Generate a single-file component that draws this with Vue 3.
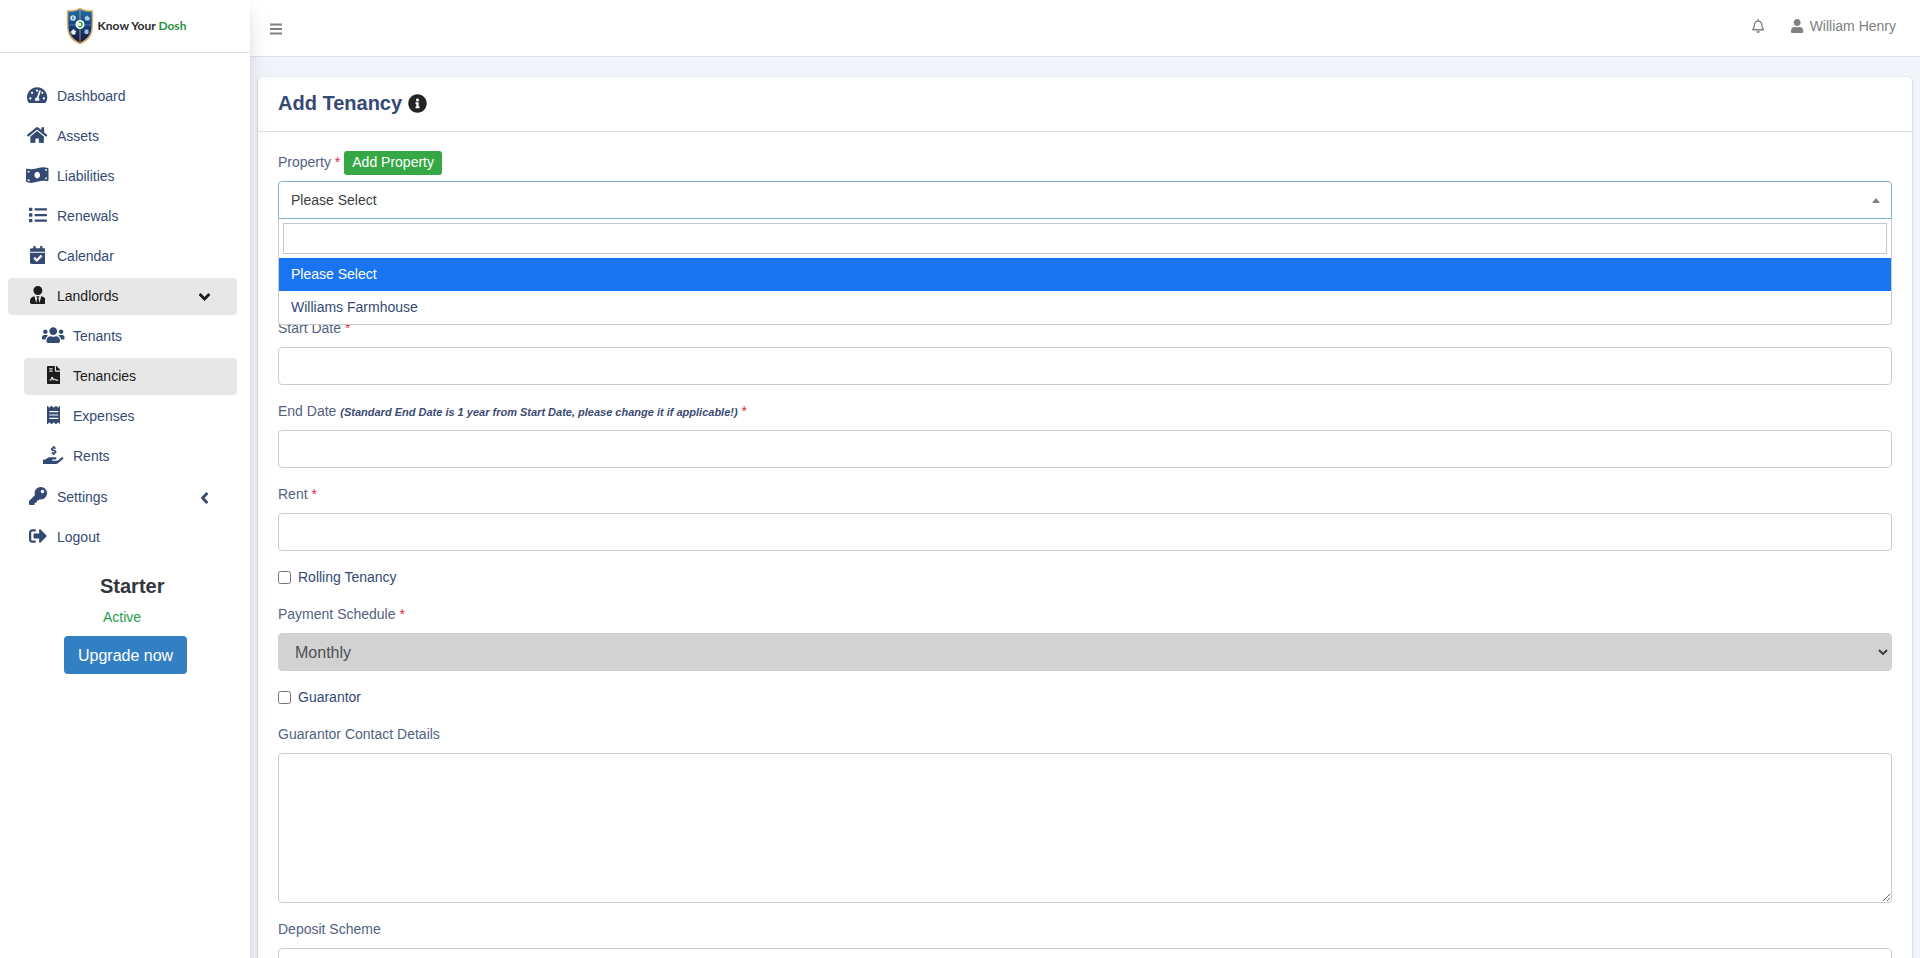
<script setup>
import { ref } from 'vue'

const icons = {
  gauge: { w: 576, d: 'M288 32C128.94 32 0 160.94 0 320c0 52.8 14.25 102.26 39.06 144.8 5.61 9.62 16.3 15.2 27.44 15.2h443c11.14 0 21.83-5.58 27.44-15.2C561.75 422.26 576 372.8 576 320c0-159.06-128.94-288-288-288zm0 64c14.71 0 26.58 10.13 30.32 23.65-1.11 2.26-2.64 4.23-3.45 6.67l-9.22 27.67c-5.13 3.49-10.97 6.01-17.64 6.01-17.67 0-32-14.33-32-32S270.33 96 288 96zM96 384c-17.67 0-32-14.33-32-32s14.33-32 32-32 32 14.33 32 32-14.33 32-32 32zm48-160c-17.67 0-32-14.33-32-32s14.33-32 32-32 32 14.33 32 32-14.33 32-32 32zm246.77-72.41l-61.33 184C343.13 347.33 352 364.54 352 384c0 11.72-3.38 22.55-8.88 32H232.88c-5.5-9.45-8.88-20.28-8.88-32 0-33.94 26.5-61.43 59.9-63.59l61.34-184.01c4.17-12.56 17.73-19.45 30.36-15.17 12.57 4.19 19.35 17.79 15.17 30.36zm14.66 57.2l15.52-46.55c3.47-1.29 7.13-2.23 11.05-2.23 17.67 0 32 14.33 32 32s-14.33 32-32 32c-11.38-.01-20.89-6.28-26.57-15.22zM480 384c-17.67 0-32-14.33-32-32s14.33-32 32-32 32 14.33 32 32-14.33 32-32 32z' },
  home: { w: 576, d: 'M280.37 148.26L96 300.11V464a16 16 0 0 0 16 16l112.06-.29a16 16 0 0 0 15.92-16V368a16 16 0 0 1 16-16h64a16 16 0 0 1 16 16v95.64a16 16 0 0 0 16 16.05L464 480a16 16 0 0 0 16-16V300L295.67 148.26a12.19 12.19 0 0 0-15.3 0zM571.6 251.47L488 182.56V44.05a12 12 0 0 0-12-12h-56a12 12 0 0 0-12 12v72.61L318.47 43a48 48 0 0 0-61 0L4.34 251.47a12 12 0 0 0-1.6 16.9l25.5 31A12 12 0 0 0 45.15 301l235.22-193.74a12.19 12.19 0 0 1 15.3 0L530.9 301a12 12 0 0 0 16.9-1.6l25.5-31a12 12 0 0 0-1.7-16.93z' },
  money: { w: 640, d: 'M621.16 54.46C582.37 38.19 543.55 32 504.75 32c-123.17-.01-246.33 62.34-369.5 62.34-30.89 0-61.76-3.92-92.65-13.72-3.47-1.1-6.95-1.62-10.35-1.62C15.04 79 0 92.32 0 110.81v317.26c0 12.63 7.23 24.6 18.84 29.46C57.63 473.81 96.45 480 135.25 480c123.17 0 246.34-62.35 369.51-62.35 30.89 0 61.76 3.92 92.65 13.72 3.47 1.1 6.95 1.62 10.35 1.62 17.21 0 32.25-13.32 32.25-31.81V83.93c-.01-12.64-7.24-24.6-18.85-29.47zM48 132.22c20.12 5.04 41.12 7.57 62.72 8.93C104.84 170.54 79 192.69 48 192.69v-60.47zm0 285v-47.78c34.37 0 62.18 27.27 63.71 61.4-22.53-1.81-43.59-6.31-63.71-13.62zM320 352c-44.19 0-80-42.99-80-96 0-53.02 35.82-96 80-96s80 42.98 80 96c0 53.03-35.83 96-80 96zm272 27.78c-17.52-4.39-35.71-6.85-54.32-8.44 5.87-26.08 27.5-45.88 54.32-49.28v57.72zm0-236.11c-30.89-3.91-54.86-29.7-55.81-61.55 19.54 2.17 38.09 6.23 55.81 12.66v48.89z' },
  list: { w: 512, d: 'M80 368H16a16 16 0 0 0-16 16v64a16 16 0 0 0 16 16h64a16 16 0 0 0 16-16v-64a16 16 0 0 0-16-16zm0-320H16A16 16 0 0 0 0 64v64a16 16 0 0 0 16 16h64a16 16 0 0 0 16-16V64a16 16 0 0 0-16-16zm0 160H16a16 16 0 0 0-16 16v64a16 16 0 0 0 16 16h64a16 16 0 0 0 16-16v-64a16 16 0 0 0-16-16zm416 176H176a16 16 0 0 0-16 16v32a16 16 0 0 0 16 16h320a16 16 0 0 0 16-16v-32a16 16 0 0 0-16-16zm0-320H176a16 16 0 0 0-16 16v32a16 16 0 0 0 16 16h320a16 16 0 0 0 16-16V80a16 16 0 0 0-16-16zm0 160H176a16 16 0 0 0-16 16v32a16 16 0 0 0 16 16h320a16 16 0 0 0 16-16v-32a16 16 0 0 0-16-16z' },
  calendar: { w: 448, d: 'M436 160H12c-6.627 0-12-5.373-12-12v-36c0-26.51 21.49-48 48-48h48V12c0-6.627 5.373-12 12-12h40c6.627 0 12 5.373 12 12v52h128V12c0-6.627 5.373-12 12-12h40c6.627 0 12 5.373 12 12v52h48c26.51 0 48 21.49 48 48v36c0 6.627-5.373 12-12 12zM12 192h424c6.627 0 12 5.373 12 12v260c0 26.51-21.49 48-48 48H48c-26.51 0-48-21.49-48-48V204c0-6.627 5.373-12 12-12zm333.296 95.947l-28.169-28.398c-4.667-4.705-12.265-4.736-16.97-.068L194.12 364.665l-45.98-46.352c-4.667-4.705-12.266-4.736-16.971-.068l-28.397 28.17c-4.705 4.667-4.736 12.265-.068 16.97l82.601 83.269c4.667 4.705 12.265 4.736 16.97.068l142.953-141.805c4.705-4.667 4.736-12.265.068-16.97z' },
  tie: { w: 448, d: 'M224 256c70.7 0 128-57.3 128-128S294.7 0 224 0 96 57.3 96 128s57.3 128 128 128zm95.8 32.6L272 480l-32-136 32-56h-96l32 56-32 136-47.8-191.4C56.9 292 0 350.3 0 422.4V464c0 26.5 21.5 48 48 48h352c26.5 0 48-21.5 48-48v-41.6c0-72.1-56.9-130.4-128.2-133.8z' },
  users: { w: 640, d: 'M96 224c35.3 0 64-28.7 64-64s-28.7-64-64-64-64 28.7-64 64 28.7 64 64 64zm448 0c35.3 0 64-28.7 64-64s-28.7-64-64-64-64 28.7-64 64 28.7 64 64 64zm32 32h-64c-17.6 0-33.5 7.1-45.1 18.6 40.3 22.1 68.9 62 75.1 109.4h66c17.7 0 32-14.3 32-32v-32c0-35.3-28.7-64-64-64zm-256 0c61.9 0 112-50.1 112-112S381.9 32 320 32 208 82.1 208 144s50.1 112 112 112zm76.8 32h-8.3c-20.8 10-43.9 16-68.5 16s-47.6-6-68.5-16h-8.3C179.6 288 128 339.6 128 403.2V432c0 26.5 21.5 48 48 48h288c26.5 0 48-21.5 48-48v-28.8c0-63.6-51.6-115.2-115.2-115.2zm-223.7-13.4C161.5 263.1 145.6 256 128 256H64c-35.3 0-64 28.7-64 64v32c0 17.7 14.3 32 32 32h65.9c6.3-47.4 34.9-87.3 75.2-109.4z' },
  contract: { w: 384, d: 'M224 136V0H24C10.7 0 0 10.7 0 24v464c0 13.3 10.7 24 24 24h336c13.3 0 24-10.7 24-24V160H248c-13.2 0-24-10.8-24-24zM64 72c0-4.42 3.58-8 8-8h80c4.42 0 8 3.58 8 8v16c0 4.42-3.58 8-8 8H72c-4.42 0-8-3.58-8-8V72zm0 64c0-4.42 3.58-8 8-8h80c4.42 0 8 3.58 8 8v16c0 4.42-3.58 8-8 8H72c-4.42 0-8-3.58-8-8v-16zm192.81 248H304c8.84 0 16 7.16 16 16s-7.16 16-16 16h-47.19c-16.45 0-31.27-9.14-38.64-23.86-2.95-5.92-8.09-6.52-10.17-6.52s-7.22.59-10.02 6.19l-7.67 15.34a15.986 15.986 0 0 1-14.31 8.84c-.38 0-.75-.02-1.14-.05-6.45-.45-12-4.75-14.03-10.89L144 354.59l-10.61 31.88c-5.89 17.66-22.38 29.53-41 29.53H80c-8.84 0-16-7.16-16-16s7.16-16 16-16h12.39c4.83 0 9.11-3.08 10.64-7.66l18.19-54.64c3.3-9.81 12.44-16.41 22.78-16.41s19.48 6.59 22.77 16.41l13.88 41.64c19.77-16.19 54.05-9.7 66 14.16 2.02 4.06 5.96 6.5 10.16 6.5zM377 105L279.1 7c-4.5-4.5-10.6-7-17-7H256v128h128v-6.1c0-6.3-2.5-12.4-7-16.9z' },
  receipt: { w: 384, d: 'M358.4 3.2L320 48 265.6 3.2a15.9 15.9 0 0 0-19.2 0L192 48 137.6 3.2a15.9 15.9 0 0 0-19.2 0L64 48 25.6 3.2C15-4.7 0 2.8 0 16v480c0 13.2 15 20.7 25.6 12.8L64 464l54.4 44.8a15.9 15.9 0 0 0 19.2 0L192 464l54.4 44.8a15.9 15.9 0 0 0 19.2 0L320 464l38.4 44.8c10.5 7.9 25.6.4 25.6-12.8V16c0-13.2-15-20.7-25.6-12.8zM320 360c0 4.4-3.6 8-8 8H72c-4.4 0-8-3.6-8-8v-16c0-4.4 3.6-8 8-8h240c4.4 0 8 3.6 8 8v16zm0-96c0 4.4-3.6 8-8 8H72c-4.4 0-8-3.6-8-8v-16c0-4.4 3.6-8 8-8h240c4.4 0 8 3.6 8 8v16zm0-96c0 4.4-3.6 8-8 8H72c-4.4 0-8-3.6-8-8v-16c0-4.4 3.6-8 8-8h240c4.4 0 8 3.6 8 8v16z' },
  hand: { w: 576, d: 'M271.06,144.3l54.27,14.3a8.59,8.59,0,0,1,6.63,8.1c0,4.6-4.09,8.4-9.12,8.4h-35.6a30,30,0,0,1-11.19-2.2c-5.24-2.2-11.28-1.7-15.3,2l-19,17.5a11.68,11.68,0,0,0-2.25,2.66,11.42,11.42,0,0,0,3.88,15.74,83.77,83.77,0,0,0,34.51,11.5V240c0,8.8,7.83,16,17.37,16h17.37c9.55,0,17.38-7.2,17.38-16V222.4c32.93-3.6,57.84-31,53.5-63-3.15-23-22.46-41.3-46.56-47.7L282.68,97.4a8.59,8.59,0,0,1-6.63-8.1c0-4.6,4.09-8.4,9.12-8.4h35.6A30,30,0,0,1,332,83.1c5.23,2.2,11.28,1.7,15.3-2l19-17.5A11.31,11.31,0,0,0,368.47,61a11.43,11.43,0,0,0-3.84-15.78,83.82,83.82,0,0,0-34.52-11.5V16c0-8.8-7.82-16-17.37-16H295.37C285.82,0,278,7.2,278,16V33.6c-32.89,3.6-57.85,31-53.51,63C227.63,119.6,247,137.9,271.06,144.3ZM565.27,328.1c-11.8-10.7-30.2-10-42.6,0L430.27,402a63.64,63.64,0,0,1-40,14H272a16,16,0,0,1,0-32h78.29c15.9,0,30.71-10.9,33.25-26.6a31.2,31.2,0,0,0,.46-5.46A32,32,0,0,0,352,320H192a117.66,117.66,0,0,0-74.1,26.29L71.4,384H16A16,16,0,0,0,0,400v96a16,16,0,0,0,16,16H372.77a64,64,0,0,0,40-14L564,377a32,32,0,0,0,1.28-48.9Z' },
  key: { w: 512, d: 'M512 176.001C512 273.203 433.202 352 336 352c-11.22 0-22.19-1.062-32.827-3.069l-24.012 27.014A23.999 23.999 0 0 1 261.223 384H224v40c0 13.255-10.745 24-24 24h-40v40c0 13.255-10.745 24-24 24H24c-13.255 0-24-10.745-24-24v-78.059c0-6.365 2.529-12.47 7.029-16.971l161.802-161.802C163.108 213.814 160 195.271 160 176 160 78.798 238.797.001 335.999 0 433.488-.001 512 78.511 512 176.001zM336 128c0 26.51 21.49 48 48 48s48-21.49 48-48-21.49-48-48-48-48 21.49-48 48z' },
  logout: { w: 512, d: 'M497 273L329 441c-15 15-41 4.5-41-17v-96H152c-13.3 0-24-10.7-24-24v-96c0-13.3 10.7-24 24-24h136V88c0-21.4 25.9-32 41-17l168 168c9.3 9.4 9.3 24.6 0 34zM192 436v-40c0-6.6-5.4-12-12-12H96c-17.7 0-32-14.3-32-32V160c0-17.7 14.3-32 32-32h84c6.6 0 12-5.4 12-12V76c0-6.6-5.4-12-12-12H96c-53 0-96 43-96 96v192c0 53 43 96 96 96h84c6.6 0 12-5.4 12-12z' },
}

const angle = 'M31.7 239l136-136c9.4-9.4 24.6-9.4 33.9 0l22.6 22.6c9.4 9.4 9.4 24.6 0 33.9L127.9 256l96.4 96.4c9.4 9.4 9.4 24.6 0 33.9L201.7 409c-9.4 9.4-24.6 9.4-33.9 0l-136-136c-9.5-9.4-9.5-24.6-.1-34z'

const nav = [
  { label: 'Dashboard', icon: 'gauge' },
  { label: 'Assets', icon: 'home' },
  { label: 'Liabilities', icon: 'money' },
  { label: 'Renewals', icon: 'list' },
  { label: 'Calendar', icon: 'calendar' },
  {
    label: 'Landlords', icon: 'tie', active: true, arrow: 'down',
    children: [
      { label: 'Tenants', icon: 'users' },
      { label: 'Tenancies', icon: 'contract', active: true },
      { label: 'Expenses', icon: 'receipt' },
      { label: 'Rents', icon: 'hand' },
    ],
  },
  { label: 'Settings', icon: 'key', arrow: 'left' },
  { label: 'Logout', icon: 'logout' },
]

const options = ['Please Select', 'Williams Farmhouse']
const property = ref(options[0])
const search = ref('')
const startDate = ref('')
const endDate = ref('')
const rent = ref('')
const rolling = ref(false)
const guarantor = ref(false)
const contact = ref('')
const deposit = ref('')
</script>

<template>
  <div class="layout">
    <aside class="sidebar">
      <a class="brand" href="#">
        <svg class="shield" viewBox="0 0 28 38" aria-hidden="true">
          <defs>
            <linearGradient id="shield-fill" x1="0" y1="0" x2="0" y2="1">
              <stop offset="0" stop-color="#1d6fa8" />
              <stop offset="0.5" stop-color="#173f7a" />
              <stop offset="1" stop-color="#14163f" />
            </linearGradient>
          </defs>
          <path d="M14 0.500C11 3 6 3.500 1 3C.6 9 .8 16 1.200 22C2 30 7 34.500 14 37.500C21 34.500 26 30 26.800 22C27.200 16 27.400 9 27 3C22 3.500 17 3 14 .5Z" fill="#d9ae6c" />
          <path d="M14 2.300C11 4.400 7 4.900 2.500 4.600C2.200 10 2.300 16 2.700 22C3.500 28.500 8 32.800 14 35.700C20 32.800 24.500 28.500 25.300 22C25.700 16 25.800 10 25.500 4.600C21 4.900 17 4.400 14 2.300Z" fill="url(#shield-fill)" />
          <path d="M14 2.500V35.300" stroke="#d9ae6c" stroke-width="0.8" />
          <path d="M3 18H25" stroke="#5c86b5" stroke-width="0.8" />
          <circle cx="7" cy="11" r="2.800" fill="#d7e8f7" />
          <path d="M7 9.300V12.700M6 11H8" stroke="#1f5c98" stroke-width="0.8" />
          <path d="M18.500 10.500L21 8.500L24 11L23 13.500H19.500Z" fill="#a9cbe8" />
          <path d="M4 25.500L7.500 22L10.500 25H9.500V27.500H5.500V25.500Z" fill="#f2f7fc" />
          <rect x="18.500" y="22.500" width="4" height="4.500" rx="1" fill="#9dbce4" />
          <circle cx="14" cy="17.500" r="4.500" fill="#f4fbf7" />
          <path d="M13 15.300A2.300 2.300 0 1 1 12.500 19.300" stroke="#2c9140" stroke-width="1.400" fill="none" />
        </svg>
        <span class="brand-text">Know Your <span class="brand-green">Dosh</span></span>
      </a>

      <nav class="nav">
        <template v-for="item in nav" :key="item.label">
          <a class="nav-link" :class="{ active: item.active }" href="#">
            <span class="nav-icon">
              <svg :viewBox="`0 0 ${icons[item.icon].w} 512`" aria-hidden="true"><path :d="icons[item.icon].d" /></svg>
            </span>
            <span class="nav-label">{{ item.label }}</span>
            <svg v-if="item.arrow" class="arrow" :class="item.arrow" viewBox="0 0 256 512" aria-hidden="true"><path :d="angle" /></svg>
          </a>
          <div v-if="item.children" class="subnav">
            <a v-for="sub in item.children" :key="sub.label" class="nav-link" :class="{ active: sub.active }" href="#">
              <span class="nav-icon">
                <svg :viewBox="`0 0 ${icons[sub.icon].w} 512`" aria-hidden="true"><path :d="icons[sub.icon].d" /></svg>
              </span>
              <span class="nav-label">{{ sub.label }}</span>
            </a>
          </div>
        </template>
      </nav>

      <section class="plan">
        <h2 class="plan-name">Starter</h2>
        <p class="plan-status">Active</p>
        <button class="upgrade" type="button">Upgrade now</button>
      </section>
    </aside>

    <div class="content">
      <header class="topbar">
        <button class="icon-button" type="button" aria-label="Toggle menu">
          <svg class="bars" viewBox="0 0 12 12" aria-hidden="true"><path d="M0 1.500H12M0 6H12M0 10.500H12" /></svg>
        </button>
        <div class="topbar-right">
          <button class="icon-button" type="button" aria-label="Notifications">
            <svg class="bell" viewBox="0 0 448 512" aria-hidden="true"><path d="M439.39 362.29c-19.32-20.76-55.47-51.99-55.47-154.29 0-77.7-54.48-139.9-127.94-155.16V32c0-17.67-14.32-32-31.98-32s-31.98 14.33-31.98 32v20.84C118.56 68.1 64.08 130.3 64.08 208c0 102.3-36.15 133.53-55.47 154.29-6 6.45-8.66 14.16-8.61 21.71.11 16.4 12.98 32 32.1 32h383.8c19.12 0 32-15.6 32.1-32 .05-7.55-2.61-15.27-8.61-21.71zM67.53 368c21.22-27.97 44.42-74.33 44.53-159.42 0-.2-.06-.38-.06-.58 0-61.86 50.14-112 112-112s112 50.14 112 112c0 .2-.06.38-.06.58.11 85.1 23.31 131.46 44.53 159.42H67.53zM224 512c35.32 0 63.97-28.65 63.97-64H160.03c0 35.35 28.65 64 63.97 64z" /></svg>
          </button>
          <a class="user" href="#">
            <svg viewBox="0 0 448 512" aria-hidden="true"><path d="M224 256c70.7 0 128-57.3 128-128S294.7 0 224 0 96 57.3 96 128s57.3 128 128 128zm89.6 32h-16.7c-22.2 10.2-46.9 16-72.9 16s-50.6-5.8-72.9-16h-16.7C60.2 288 0 348.2 0 422.4V464c0 26.5 21.5 48 48 48h352c26.5 0 48-21.5 48-48v-41.6c0-74.2-60.2-134.400-134.400-134.400z" /></svg>
            <span>William Henry</span>
          </a>
        </div>
      </header>

      <main class="main">
        <section class="card">
          <div class="card-header">
            <h1>Add Tenancy</h1>
            <svg class="info" viewBox="0 0 512 512" aria-hidden="true"><path d="M256 8C119.043 8 8 119.083 8 256c0 136.997 111.043 248 248 248s248-111.003 248-248C504 119.083 392.957 8 256 8zm0 110c23.196 0 42 18.804 42 42s-18.804 42-42 42-42-18.804-42-42 18.804-42 42-42zm56 254c0 6.627-5.373 12-12 12h-88c-6.627 0-12-5.373-12-12v-24c0-6.627 5.373-12 12-12h12v-64h-12c-6.627 0-12-5.373-12-12v-24c0-6.627 5.373-12 12-12h64c6.627 0 12 5.373 12 12v100h12c6.627 0 12 5.373 12 12v24z" /></svg>
          </div>

          <form class="card-body" @submit.prevent>
            <div class="field field-open">
              <div class="label-row">
                <label id="property-label" for="property">Property <span class="req">*</span></label>
                <button class="add" type="button">Add Property</button>
              </div>
              <div class="combo">
                <button id="property" class="combo-value" type="button" role="combobox" aria-expanded="true" aria-controls="property-list">
                  <span>{{ property }}</span>
                  <span class="caret"></span>
                </button>
                <div class="dropdown">
                  <div class="search-wrap">
                    <input v-model="search" class="search" type="text" aria-label="Search properties" />
                  </div>
                  <ul id="property-list" role="listbox" aria-labelledby="property-label">
                    <li v-for="o in options" :key="o" role="option" :aria-selected="o === property" :class="{ selected: o === property }">{{ o }}</li>
                  </ul>
                </div>
              </div>
            </div>

            <div class="field">
              <label for="start">Start Date <span class="req">*</span></label>
              <input id="start" v-model="startDate" class="control" type="text" />
            </div>

            <div class="field">
              <label for="end">End Date <em class="note">(Standard End Date is 1 year from Start Date, please change it if applicable!)</em> <span class="req">*</span></label>
              <input id="end" v-model="endDate" class="control" type="text" />
            </div>

            <div class="field">
              <label for="rent">Rent <span class="req">*</span></label>
              <input id="rent" v-model="rent" class="control" type="text" />
            </div>

            <div class="check">
              <input id="rolling" v-model="rolling" type="checkbox" />
              <label for="rolling">Rolling Tenancy</label>
            </div>

            <div class="field">
              <label for="schedule">Payment Schedule <span class="req">*</span></label>
              <div class="select-wrap">
                <select id="schedule" class="control" disabled>
                  <option>Monthly</option>
                </select>
                <svg viewBox="0 0 10 6" aria-hidden="true"><path d="M1 1L5 5L9 1" /></svg>
              </div>
            </div>

            <div class="check">
              <input id="guarantor" v-model="guarantor" type="checkbox" />
              <label for="guarantor">Guarantor</label>
            </div>

            <div class="field">
              <label for="contact">Guarantor Contact Details</label>
              <textarea id="contact" v-model="contact" class="control"></textarea>
            </div>

            <div class="field">
              <label for="deposit">Deposit Scheme</label>
              <input id="deposit" v-model="deposit" class="control" type="text" />
            </div>
          </form>
        </section>
      </main>
    </div>
  </div>
</template>

<style>
body {
  margin: 0;
  overflow: hidden;
}
</style>

<style scoped>
.layout,
.layout * {
  box-sizing: border-box;
}

.layout {
  display: grid;
  grid-template-columns: 250px 1fr;
  height: 100vh;
  overflow: hidden;
  background: #f1f4f9;
  color: #344a73;
  font: 14px/21px "Liberation Sans", Arial, sans-serif;
}

button,
input,
select,
textarea {
  font: inherit;
  color: inherit;
  margin: 0;
}

a {
  color: inherit;
  text-decoration: none;
}

/* Sidebar */
.sidebar {
  position: relative;
  z-index: 2;
  background: #fff;
  box-shadow: 0 14px 28px rgba(0, 0, 0, 0.08), 0 10px 10px rgba(0, 0, 0, 0.08);
}

.brand {
  display: flex;
  align-items: center;
  justify-content: center;
  gap: 4px;
  height: 53px;
  padding-left: 2px;
  border-bottom: 1px solid #dee2e6;
}

.shield {
  width: 28px;
  height: 38px;
}

.brand-text {
  font: 700 12px/20px Lato, sans-serif;
  color: #2b2b2b;
}

.brand-green {
  color: #2c9140;
}

.nav {
  display: flex;
  flex-direction: column;
  gap: 3px;
  padding: 25px 13px 0 8px;
}

.subnav {
  display: flex;
  flex-direction: column;
  gap: 3px;
  padding: 0 0 1px 16px;
}

.nav-link {
  display: flex;
  gap: 6px;
  padding: 8px 16px;
  border-radius: 4px;
}

.nav-link.active {
  background: #e7e7e7;
  color: #1b1c1e;
}

.nav-icon {
  display: flex;
  justify-content: center;
  width: 27px;
  height: 18px;
}

svg {
  display: block;
  fill: currentColor;
}

.nav-icon svg {
  height: 18px;
}

.nav-label {
  flex: 1;
}

.arrow {
  align-self: center;
  height: 18px;
  margin-right: 12px;
}

.arrow.down {
  transform: rotate(-90deg);
}

.plan {
  display: flex;
  flex-direction: column;
  align-items: flex-start;
  padding: 18px 64px 0;
}

.plan-name {
  margin: 0;
  padding-left: 36px;
  font-size: 20px;
  line-height: 24px;
  color: #33373d;
}

.plan-status {
  margin: 9px 0 8px;
  padding-left: 39px;
  color: #23a047;
}

.upgrade {
  height: 38px;
  padding: 0 14px;
  border: 0;
  border-radius: 4px;
  background: #327fc4;
  color: #fff;
  font-size: 16px;
  white-space: nowrap;
}

/* Top bar */
.content {
  display: flex;
  flex-direction: column;
  min-width: 0;
}

.topbar {
  display: flex;
  justify-content: space-between;
  align-items: center;
  flex: none;
  height: 57px;
  padding: 2px 24px 0 20px;
  border-bottom: 1px solid #dee2e6;
  background: #fff;
  color: #808080;
}

.icon-button {
  padding: 0;
  border: 0;
  background: none;
}

.bars {
  width: 12px;
  height: 12px;
  stroke: currentColor;
  stroke-width: 2;
}

.topbar-right {
  display: flex;
  align-items: center;
  gap: 27px;
  padding-bottom: 6px;
}

.bell {
  height: 14px;
}

.user {
  display: flex;
  align-items: center;
  gap: 6px;
}

.user svg {
  height: 14px;
}

/* Card */
.main {
  padding: 20px 8px;
}

.card {
  border-radius: 4px;
  background: #fff;
  box-shadow: 0 0 1px rgba(0, 0, 0, 0.13), 0 1px 3px rgba(0, 0, 0, 0.2);
}

.card-header {
  display: flex;
  align-items: center;
  gap: 6px;
  height: 55px;
  padding: 0 20px 2px;
  border-bottom: 1px solid #dfe1e4;
}

.card-header h1 {
  margin: 0;
  font-size: 20px;
  line-height: 24px;
}

.info {
  width: 19px;
  height: 19px;
  color: #222426;
}

.card-body {
  padding: 20px;
}

.field {
  margin-bottom: 16px;
}

/* Leaves room under the open list */
.field-open {
  margin-bottom: 99px;
}

.field > label {
  display: block;
  margin-bottom: 8px;
}

.field label {
  color: #53627f;
}

.label-row {
  display: flex;
  align-items: center;
  gap: 4px;
  height: 21px;
  margin-bottom: 8px;
}

.field .req {
  color: #e0283c;
}

.add {
  height: 24px;
  padding: 0 8px;
  border: 0;
  border-radius: 3px;
  background: #35a745;
  color: #fff;
}

.note {
  font-size: 11px;
  line-height: 11px;
  font-weight: 700;
  color: #3b4a73;
}

.control {
  display: block;
  width: 100%;
  height: 38px;
  padding: 6px 12px;
  border: 1px solid #c9ced3;
  border-radius: 4px;
  background: #fff;
}

textarea.control {
  height: 150px;
  resize: vertical;
}

.combo {
  position: relative;
}

.combo-value {
  display: flex;
  align-items: center;
  justify-content: space-between;
  width: 100%;
  height: 38px;
  padding: 1px 11px 0 12px;
  border: 1px solid #80aed0;
  border-radius: 4px 4px 0 0;
  background: #fff;
  color: #3c3f43;
}

.caret {
  border: 4px solid transparent;
  border-top: 0;
  border-bottom: 5px solid #808080;
}

.dropdown {
  position: absolute;
  z-index: 1;
  top: 100%;
  left: 0;
  right: 0;
  border: 1px solid #c9ced3;
  border-top: 0;
  border-radius: 0 0 4px 4px;
  background: #fff;
}

.search-wrap {
  padding: 4px;
}

.search {
  display: block;
  width: 100%;
  height: 31px;
  padding: 4px;
  border: 1px solid #c5c9cd;
}

.dropdown ul {
  margin: 0;
  padding: 0;
  list-style: none;
}

.dropdown li {
  padding: 6px 12px;
}

.dropdown li.selected {
  background: #1874f0;
  color: #fff;
}

.check {
  display: flex;
  align-items: center;
  gap: 7px;
  margin-bottom: 16px;
}

.check input {
  width: 13px;
  height: 13px;
}

.select-wrap {
  position: relative;
}

.select-wrap .control {
  appearance: none;
  padding: 0 16px;
  border-color: #ced2d4;
  background: #d2d2d2;
  color: #4c4f52;
  font-size: 16px;
  opacity: 1;
}

.select-wrap svg {
  position: absolute;
  right: 4px;
  top: 16px;
  width: 10px;
  height: 6px;
  fill: none;
  stroke: #3f4144;
  stroke-width: 2;
}
</style>
